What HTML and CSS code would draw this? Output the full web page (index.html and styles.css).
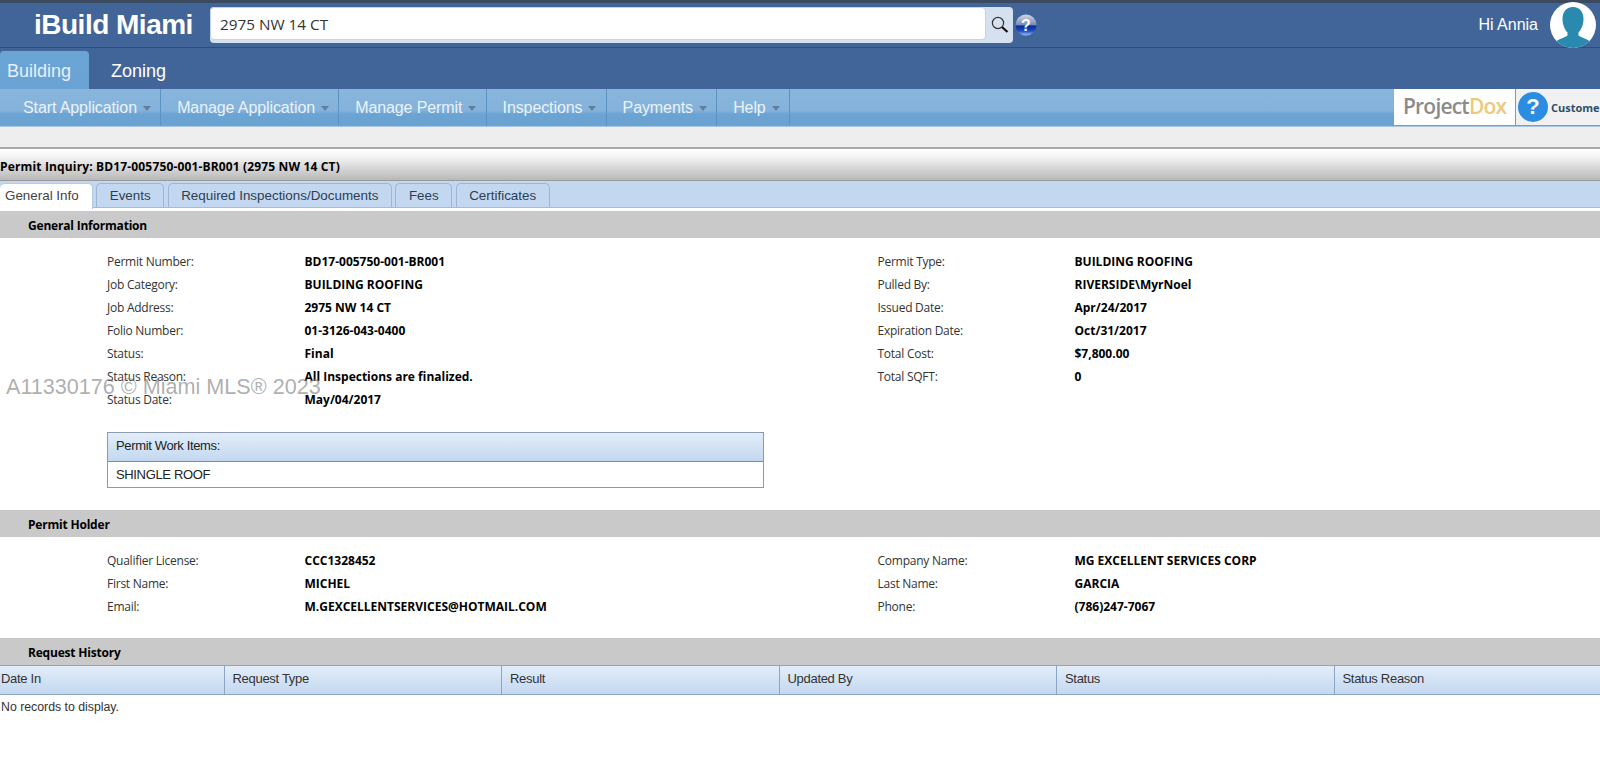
FILE: index.html
```html
<!DOCTYPE html>
<html lang="en">
<head>
  <meta charset="UTF-8" />
  <title>iBuild Miami</title>
  <link rel="stylesheet" href="styles.css">
</head>
<body>

<header class="topbar">
  <div class="logo">iBuild Miami</div>
  <div class="search">
    <input class="search-input" type="text" value="2975 NW 14 CT" />
    <div class="search-btn">
      <svg width="20" height="20" viewBox="0 0 20 20">
        <circle cx="8" cy="8" r="5.6" fill="none" stroke="#333" stroke-width="1.2"/>
        <line x1="12" y1="12" x2="17.5" y2="17" stroke="#111" stroke-width="2.2"/>
      </svg>
    </div>
  </div>
  <svg class="help-orb" width="22" height="22" viewBox="0 0 22 22">
    <defs>
      <linearGradient id="orb" x1="0" y1="0" x2="0" y2="1">
        <stop offset="0" stop-color="#d4d8e4"/>
        <stop offset="0.48" stop-color="#7a8cb8"/>
        <stop offset="0.55" stop-color="#0b2a98"/>
        <stop offset="0.78" stop-color="#1c4cc4"/>
        <stop offset="1" stop-color="#a4c0ee"/>
      </linearGradient>
    </defs>
    <circle cx="11" cy="11" r="10.5" fill="url(#orb)"/>
    <text x="11" y="17" text-anchor="middle" class="orb-mark">?</text>
  </svg>
  <div class="user">
    <span>Hi Annia</span>
    <svg class="avatar" width="46" height="46" viewBox="0 0 46 46">
      <circle cx="23" cy="23" r="23" fill="#fff"/>
      <path d="M23 5c-7 0-10.500 5-10.500 12 0 6 2.500 11 5 13.500v3c-3 2-8 3.500-11 5.500a23 23 0 0 0 33 0c-3-2-8-3.500-11-5.500v-3c2.500-2.500 5-7.500 5-13.500 0-7-3.500-12-10.500-12z" fill="#2a89ae"/>
    </svg>
  </div>
</header>

<div class="module-tabs">
  <a class="module active">Building</a>
  <a class="module">Zoning</a>
</div>

<nav class="menu">
  <a class="menu-item first">Start Application<i class="caret"></i></a>
  <a class="menu-item">Manage Application<i class="caret"></i></a>
  <a class="menu-item">Manage Permit<i class="caret"></i></a>
  <a class="menu-item">Inspections<i class="caret"></i></a>
  <a class="menu-item">Payments<i class="caret"></i></a>
  <a class="menu-item">Help<i class="caret"></i></a>
  <div class="menu-right">
    <div class="projectdox">Project<span>Dox</span></div>
    <div class="customer">
      <span class="customer-q">?</span>
      <span class="customer-text">Customer</span>
    </div>
  </div>
</nav>

<div class="spacer"></div>

<div class="title-bar">Permit Inquiry: BD17-005750-001-BR001 (2975 NW 14 CT)</div>

<div class="tabs">
  <a class="tab active">General Info</a>
  <a class="tab">Events</a>
  <a class="tab">Required Inspections/Documents</a>
  <a class="tab">Fees</a>
  <a class="tab">Certificates</a>
</div>

<main class="content">
  <h3 class="section-head">General Information</h3>
  <div class="fields">
    <span>Permit Number:</span><b>BD17-005750-001-BR001</b><span>Permit Type:</span><b>BUILDING ROOFING</b>
    <span>Job Category:</span><b>BUILDING ROOFING</b><span>Pulled By:</span><b>RIVERSIDE\MyrNoel</b>
    <span>Job Address:</span><b>2975 NW 14 CT</b><span>Issued Date:</span><b>Apr/24/2017</b>
    <span>Folio Number:</span><b>01-3126-043-0400</b><span>Expiration Date:</span><b>Oct/31/2017</b>
    <span>Status:</span><b>Final</b><span>Total Cost:</span><b>$7,800.00</b>
    <span>Status Reason:</span><b>All Inspections are finalized.</b><span>Total SQFT:</span><b>0</b>
    <span>Status Date:</span><b>May/04/2017</b>
  </div>

  <div class="work-items">
    <div class="work-head">Permit Work Items:</div>
    <div class="work-row">SHINGLE ROOF</div>
  </div>

  <h3 class="section-head">Permit Holder</h3>
  <div class="fields holder">
    <span>Qualifier License:</span><b>CCC1328452</b><span>Company Name:</span><b>MG EXCELLENT SERVICES CORP</b>
    <span>First Name:</span><b>MICHEL</b><span>Last Name:</span><b>GARCIA</b>
    <span>Email:</span><b>M.GEXCELLENTSERVICES@HOTMAIL.COM</b><span>Phone:</span><b>(786)247-7067</b>
  </div>

  <h3 class="section-head">Request History</h3>
  <div class="grid-head">
    <div>Date In</div>
    <div>Request Type</div>
    <div>Result</div>
    <div>Updated By</div>
    <div>Status</div>
    <div>Status Reason</div>
  </div>
  <div class="no-records">No records to display.</div>
</main>

<div class="watermark">A11330176 © Miami MLS® 2023</div>

</body>
</html>
```

FILE: styles.css
```css
html, body {
  margin: 0;
  padding: 0;
  height: 774px;
  overflow: hidden;
  background: #fff;
  font-family: 'Liberation Sans', Arial, sans-serif;
  color: #111;
}

/* top bar */
.topbar {
  height: 44px;
  display: flex;
  align-items: center;
  background: #426599;
  border-top: 3px solid #3b4a5e;
  border-bottom: 1px solid #2e4e78;
}
.logo {
  margin-left: 34px;
  width: 176px;
  color: #fff;
  font-size: 28px;
  font-weight: bold;
  letter-spacing: -0.5px;
  white-space: nowrap;
}
.search {
  display: flex;
  width: 803px;
  height: 36px;
  background: #d6e1ef;
  border-radius: 4px;
}
.search-input {
  width: 776px;
  height: 33px;
  box-sizing: border-box;
  padding: 0 9px;
  border: 1px solid #c3d4e8;
  border-radius: 4px;
  background: #fff;
  font-family: 'Open Sans', sans-serif;
  font-size: 15.300px;
  color: #333;
}
.search-btn {
  flex: 1;
  display: flex;
  align-items: center;
  justify-content: center;
}
.help-orb {
  margin-left: 2px;
}
.orb-mark {
  font-family: 'Liberation Sans', sans-serif;
  font-size: 16px;
  font-weight: bold;
  fill: #fff;
}
.user {
  margin-left: auto;
  margin-right: 4px;
  display: flex;
  align-items: center;
  gap: 12px;
  color: #fff;
  font-size: 16px;
}
.avatar {
  display: block;
}

/* module tabs */
.module-tabs {
  height: 41px;
  display: flex;
  align-items: flex-end;
  background: #426599;
}
.module {
  height: 38px;
  line-height: 40px;
  color: #fff;
  font-size: 18px;
}
.module.active {
  width: 82px;
  padding-left: 7px;
  margin-right: 22px;
  color: #e6f0fa;
  background: linear-gradient(to bottom, #6aa5d6, #6aa3d3);
  border-radius: 4px 4px 0 0;
}

/* menu bar */
.menu {
  height: 37px;
  display: flex;
  align-items: stretch;
  background: linear-gradient(to bottom, #88b5dc 0%, #84b2da 58%, #6ba4d3 68%, #6aa3d2 100%);
  border-bottom: 1px solid #a9c6e2;
}
.menu-item {
  display: flex;
  align-items: center;
  padding: 0 9.200px 0 16px;
  color: #eaf2fa;
  font-size: 16px;
  letter-spacing: -0.1px;
  border-right: 1px solid #5b94c4;
  white-space: nowrap;
}
.menu-item.first {
  padding-left: 23px;
}
.caret {
  width: 0;
  height: 0;
  margin-left: 6px;
  margin-top: 2px;
  border-left: 4.500px solid transparent;
  border-right: 4.500px solid transparent;
  border-top: 5px solid #5f7f9f;
}
.menu-right {
  margin-left: auto;
  display: flex;
  align-items: stretch;
  height: 36px;
  overflow: hidden;
}
.projectdox {
  width: 122px;
  box-sizing: border-box;
  padding-left: 9px;
  background: #fff;
  border-right: 1px solid #7d99b5;
  color: #8b8b8b;
  font-family: 'Open Sans', sans-serif;
  font-size: 21px;
  font-weight: 600;
  letter-spacing: -0.8px;
  line-height: 35px;
}
.projectdox span {
  color: #ecca7c;
}
.customer {
  width: 82px;
  display: flex;
  align-items: center;
  gap: 3px;
  padding-left: 2px;
  background: #f1f1f1;
  white-space: nowrap;
}
.customer-q {
  flex: none;
  width: 30px;
  height: 30px;
  line-height: 30px;
  text-align: center;
  border-radius: 50%;
  background: #2a8de2;
  color: #fff;
  font-size: 22px;
  font-weight: bold;
}
.customer-text {
  font-family: 'Open Sans', sans-serif;
  font-size: 11px;
  font-weight: bold;
  color: #2f4d6b;
}

.spacer {
  height: 20px;
  background: #eeeeee;
}

/* page title */
.title-bar {
  height: 31px;
  line-height: 36px;
  border-top: 2px solid #a8a8a8;
  border-bottom: 1px solid #9a9a9a;
  background: linear-gradient(to bottom, #ffffff 0%, #f4f4f4 25%, #b8b8b8 100%);
  font-family: 'Open Sans', sans-serif;
  font-size: 12px;
  font-weight: bold;
  letter-spacing: 0.15px;
  color: #000;
  overflow: hidden;
}

/* tabs */
.tabs {
  height: 24px;
  padding-top: 2px;
  display: flex;
  gap: 3.500px;
  background: #c3d8f0;
  border-bottom: 1px solid #a4bcd6;
}
.tab {
  height: 23px;
  line-height: 23px;
  padding: 0 12.500px;
  font-size: 13.400px;
  color: #2c3e50;
  background: #c3d8f0;
  border: 1px solid #9db6d2;
  border-bottom: none;
  border-radius: 5px 5px 0 0;
}
.tab.active {
  height: 25px;
  padding: 0 13px 0 5px;
  background: #fff;
  color: #444;
  border-left: none;
  border-color: #b5cbe2;
}

/* content */
.content {
  padding-top: 3px;
}
.section-head {
  height: 27px;
  margin: 0;
  padding-left: 28px;
  line-height: 29px;
  background: #c9c9c9;
  font-family: 'Open Sans', sans-serif;
  font-size: 12px;
  font-weight: bold;
  letter-spacing: -0.2px;
  color: #000;
}
.fields {
  display: grid;
  grid-template-columns: 197.500px 573px 197px 1fr;
  grid-auto-rows: 23px;
  align-items: center;
  padding: 12px 0 0 107px;
  font-family: 'Open Sans', sans-serif;
  font-size: 12px;
}
.fields span {
  color: #333;
  letter-spacing: -0.25px;
}
.fields b {
  color: #000;
}
.fields.holder {
  padding-bottom: 20px;
}
.work-items {
  width: 655px;
  margin: 21px 0 22px 107px;
  border: 1px solid #8a9bb0;
  font-size: 13px;
  letter-spacing: -0.35px;
  color: #222;
}
.work-head {
  height: 28px;
  line-height: 26px;
  padding-left: 8px;
  background: linear-gradient(to bottom, #e3edf9, #c3d8f0);
  border-bottom: 1px solid #6f8fb0;
}
.work-row {
  height: 25px;
  line-height: 25px;
  padding-left: 8px;
}
.grid-head {
  display: grid;
  grid-template-columns: 224.500px repeat(4, 277.500px) 1fr;
  height: 28px;
  background: linear-gradient(to bottom, #e3edf9, #c3d8f0);
  border-top: 1px solid #8ba6c4;
  border-bottom: 1px solid #8ba6c4;
  font-size: 13px;
  letter-spacing: -0.3px;
  line-height: 26px;
  color: #333;
}
.grid-head div {
  padding-left: 8px;
  border-right: 1px solid #8ba6c4;
}
.grid-head div:first-child {
  padding-left: 1px;
}
.grid-head div:last-child {
  border-right: none;
}
.no-records {
  padding: 5px 0 0 1px;
  font-size: 12.300px;
  color: #333;
}

.watermark {
  position: absolute;
  left: 6px;
  top: 374px;
  font-size: 21.600px;
  color: rgba(130, 130, 130, 0.65);
  white-space: nowrap;
}
```
